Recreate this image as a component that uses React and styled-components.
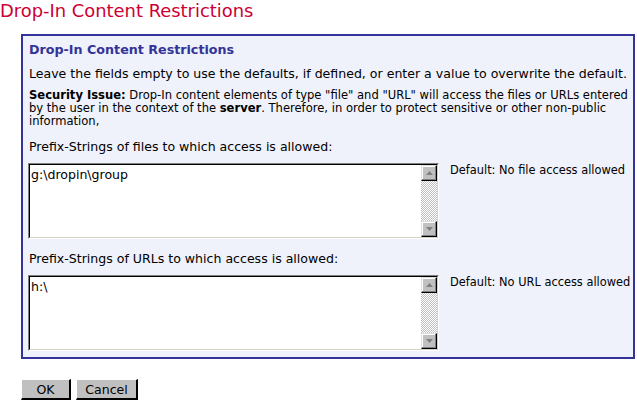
import React from "react";
import styled, { createGlobalStyle } from "styled-components";

const GlobalStyle = createGlobalStyle`
    body {
        margin: 0;
        background: #ffffff;
        font-family: "DejaVu Sans", Verdana, sans-serif;
        color: #000000;
    }
`;

const Page = styled.div`
    width: 637px;
    height: 404px;
    overflow: hidden;
`;

const Title = styled.h1`
    margin: 0;
    padding-top: 0;
    font-size: 17.9px;
    font-weight: normal;
    color: #cc0033;
    line-height: 21px;
`;

const Panel = styled.div`
    margin: 13px 2px 0 21px;
    border: 2px solid #333399;
    background: #eff2fa;
    padding: 6px 5px 6px 5px;
`;

const Heading = styled.h2`
    margin: 0 0 0 1px;
    font-size: 12.7px;
    font-weight: bold;
    color: #333399;
    line-height: 15px;
`;

const Intro = styled.p`
    margin: 9px 0 0 1px;
    font-size: 12.55px;
    line-height: 15px;
`;

const Note = styled.p`
    margin: 8px 0 0 1px;
    font-size: 11.55px;
    line-height: 13px;
`;

const Label = styled.div`
    margin: ${(p) => p.$top}px 0 0 1px;
    font-size: 12.55px;
    line-height: 15px;
`;

const FieldRow = styled.div`
    display: grid;
    grid-template-columns: 411px 1fr;
    column-gap: 11px;
    margin-top: 9px;
`;

const Box = styled.div`
    display: flex;
    height: 76px;
    background: #ffffff;
    border-top: 1px solid #808080;
    border-left: 1px solid #808080;
    border-right: 1px solid #ffffff;
    border-bottom: 1px solid #ffffff;
    box-sizing: border-box;
`;

const BoxInner = styled.div`
    display: flex;
    flex: 1;
    border-top: 1px solid #000000;
    border-left: 1px solid #000000;
    border-right: 1px solid #d4d0c8;
    border-bottom: 1px solid #d4d0c8;
`;

const Text = styled.div`
    flex: 1;
    padding: 2px 1px;
    font-size: 12.55px;
    line-height: 15px;
`;

const Scrollbar = styled.div`
    width: 16px;
    display: flex;
    flex-direction: column;
    background-color: #ffffff;
    background-image: repeating-conic-gradient(#c0c0c0 0 25%, #ffffff 0 50%);
    background-size: 2px 2px;
`;

const ArrowButton = styled.div`
    width: 16px;
    height: 16px;
    box-sizing: border-box;
    background: #c0c0c0;
    border-top: 1px solid #dfdfdf;
    border-left: 1px solid #dfdfdf;
    border-right: 1px solid #000000;
    border-bottom: 1px solid #000000;
    box-shadow: inset -1px -1px 0 #808080, inset 1px 1px 0 #ffffff;
    display: flex;
    align-items: center;
    justify-content: center;
`;

const Track = styled.div`
    flex: 1;
`;

const Hint = styled.div`
    font-size: 11.4px;
    line-height: 13px;
    padding-top: 1px;
    white-space: nowrap;
`;

const Actions = styled.div`
    display: flex;
    gap: 5px;
    margin: 20px 0 0 21px;
`;

const Button = styled.button`
    height: 21px;
    min-width: ${(p) => p.$w}px;
    padding: 0;
    font-family: "DejaVu Sans", Verdana, sans-serif;
    font-size: 12.55px;
    background: #c0c0c0;
    color: #000000;
    border-top: 1px solid #ffffff;
    border-left: 1px solid #ffffff;
    border-right: 2px solid #000000;
    border-bottom: 2px solid #000000;
    box-sizing: border-box;
`;

function Arrow({ up }) {
    return (
        <svg width="7" height="4" viewBox="0 0 7 4">
            <polygon
                points={up ? "3.5,0 7,4 0,4" : "0,0 7,0 3.5,4"}
                fill="#808080"
            />
        </svg>
    );
}

function Field({ value, hint }) {
    return (
        <FieldRow>
            <Box>
                <BoxInner>
                    <Text>{value}</Text>
                    <Scrollbar>
                        <ArrowButton>
                            <Arrow up />
                        </ArrowButton>
                        <Track />
                        <ArrowButton>
                            <Arrow />
                        </ArrowButton>
                    </Scrollbar>
                </BoxInner>
            </Box>
            <Hint>{hint}</Hint>
        </FieldRow>
    );
}

export default function App() {
    return (
        <Page>
            <GlobalStyle />
            <Title>Drop-In Content Restrictions</Title>
            <Panel>
                <Heading>Drop-In Content Restrictions</Heading>
                <Intro>
                    Leave the fields empty to use the defaults, if defined, or
                    enter a value to overwrite the default.
                </Intro>
                <Note>
                    <b>Security Issue:</b> Drop-In content elements of type
                    "file" and "URL" will access the files or URLs entered by
                    the user in the context of the <b>server</b>. Therefore, in
                    order to protect sensitive or other non-public information,
                </Note>
                <Label $top={11}>
                    Prefix-Strings of files to which access is allowed:
                </Label>
                <Field
                    value="g:\dropin\group"
                    hint="Default: No file access allowed"
                />
                <Label $top={12}>
                    Prefix-Strings of URLs to which access is allowed:
                </Label>
                <Field value="h:\" hint="Default: No URL access allowed" />
            </Panel>
            <Actions>
                <Button $w={50}>OK</Button>
                <Button $w={62}>Cancel</Button>
            </Actions>
        </Page>
    );
}
